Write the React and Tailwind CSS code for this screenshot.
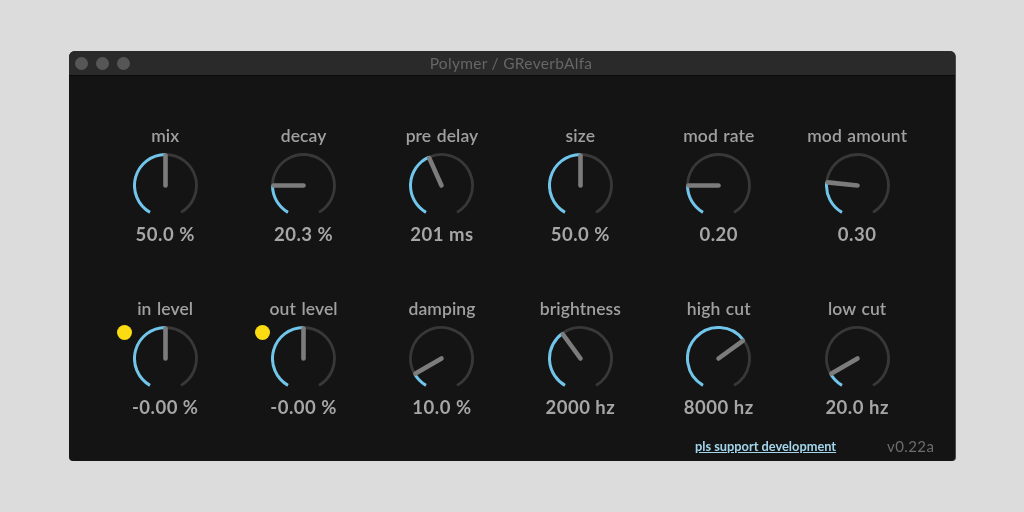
const polar = (a, r) => {
  const t = ((a - 90) * Math.PI) / 180;
  return [32.5 + r * Math.cos(t), 32.5 + r * Math.sin(t)];
};
const arc = (from, to, r) => {
  const [x1, y1] = polar(from, r);
  const [x2, y2] = polar(to, r);
  return `M${x1} ${y1}A${r} ${r} 0 ${to - from > 180 ? 1 : 0} 1 ${x2} ${y2}`;
};

function Knob({ v }) {
  const a = -150 + 300 * v;
  const [nx, ny] = polar(a, 30);
  return (
    <svg width="65" height="65" viewBox="0 0 65 65" className="block">
      <path d={arc(a, 150, 31)} fill="none" stroke="#383838" strokeWidth="2.8" />
      <path d={arc(-150, a, 31)} fill="none" stroke="#71c5ea" strokeWidth="3" />
      <line x1="32.5" y1="32.5" x2={nx} y2={ny} stroke="#7c7c7c" strokeWidth="4.6" strokeLinecap="round" />
    </svg>
  );
}

function Param({ label, value, v, dot }) {
  return (
    <div className="flex flex-col items-center">
      <div className="h-[22px] text-[17.5px] leading-[22px] font-semibold tracking-[0.1px] [word-spacing:1px] text-[#a0a0a0] whitespace-nowrap">{label}</div>
      <div className="relative mt-[6px]">
        {dot && <div className="absolute left-[-16px] top-[-1px] h-[15px] w-[15px] rounded-full bg-[#fbdc12]" />}
        <Knob v={v} />
      </div>
      <div className="mt-[4px] h-[24px] text-[18.5px] leading-[24px] font-bold tracking-[0.5px] text-[#a6a6a6] whitespace-nowrap">{value}</div>
    </div>
  );
}

const params = [
  ["mix", "50.0 %", 0.5],
  ["decay", "20.3 %", 0.2],
  ["pre delay", "201 ms", 0.42],
  ["size", "50.0 %", 0.5],
  ["mod rate", "0.20", 0.2],
  ["mod amount", "0.30", 0.22],
  ["in level", "-0.00 %", 0.5, true],
  ["out level", "-0.00 %", 0.5, true],
  ["damping", "10.0 %", 0.1],
  ["brightness", "2000 hz", 0.38],
  ["high cut", "8000 hz", 0.68],
  ["low cut", "20.0 hz", 0.1],
];

export default function App() {
  return (
    <div className="h-[512px] w-[1024px] overflow-hidden bg-[#dcdcdc] pl-[69px] pt-[51px] font-['Lato',sans-serif]">
      <div className="flex h-[410px] w-[887px] flex-col overflow-hidden rounded-t-[6px] rounded-b-[4px] border-r border-[#4a4a4a] bg-[#141414] blur-[0.6px]">
        <div className="relative flex h-[25px] items-center border-b border-[#0a0a0a] bg-[#2a2a2a] pl-[6px]">
          <div className="flex gap-[8px]">
            <div className="h-[13px] w-[13px] rounded-full bg-[#565656]" />
            <div className="h-[13px] w-[13px] rounded-full bg-[#565656]" />
            <div className="h-[13px] w-[13px] rounded-full bg-[#565656]" />
          </div>
          <div className="absolute inset-0 pr-[2px] text-center text-[15.5px] leading-[24px] tracking-[0.3px] text-[#666666]">Polymer / GReverbAlfa</div>
        </div>
        <div className="grid grid-cols-[repeat(6,138.4px)] gap-y-[52px] pl-[27px] pt-[49px]">
          {params.map(([l, val, v, d]) => (
            <Param key={l} label={l} value={val} v={v} dot={d} />
          ))}
        </div>
        <div className="mt-[16px] flex items-center pl-[626px]">
          <a className="w-[142px] text-[12.8px] font-bold whitespace-nowrap text-[#a3d6ec] underline">pls support development</a>
          <span className="ml-[50px] text-[15px] tracking-[0.4px] text-[#6c6c6c]">v0.22a</span>
        </div>
      </div>
    </div>
  );
}
